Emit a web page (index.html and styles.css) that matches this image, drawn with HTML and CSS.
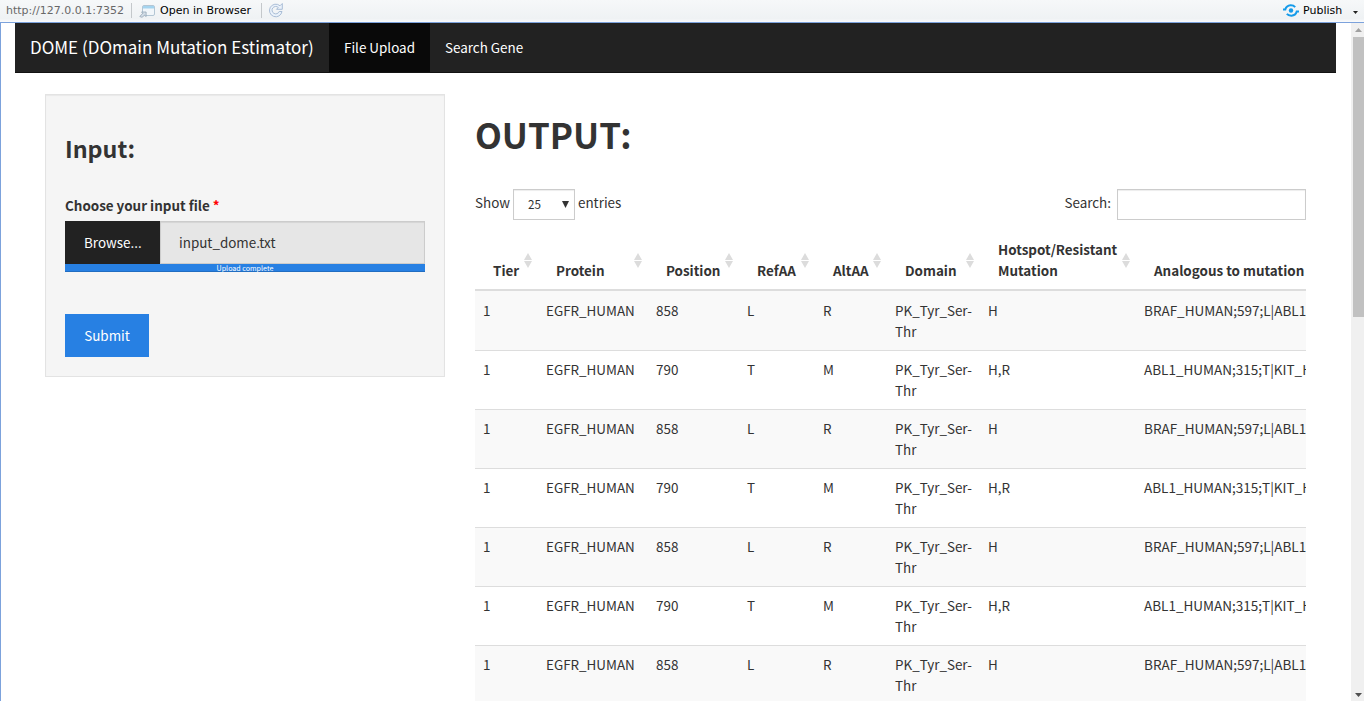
FILE: index.html
```
<!DOCTYPE html>
<html lang="en">
<head>
<meta charset="utf-8">
<title>DOME</title>
<link rel="stylesheet" href="styles.css">
</head>
<body>
<header class="toolbar">
  <span class="url">http://127.0.0.1:7352</span>
  <span class="sep"></span>
  <svg class="open-icon" width="16" height="14" viewBox="0 0 16 14"><rect x="3.500" y="1.500" width="12" height="10" rx="1.500" fill="#f1f6fa" stroke="#b3c6d4"/><path d="M4 2h11v2.500H4z" fill="#a4d4ef"/><path d="M.8 12.500l3-3.200L2.500 8h4.600v4.600L5.600 11.200 3 13.300z" fill="#d5dfe8" stroke="#93a5b5" stroke-width=".8"/></svg>
  <span class="open">Open in Browser</span>
  <span class="sep sep2"></span>
  <svg class="reload" width="16" height="16" viewBox="0 0 16 16"><path d="M12 3.800A6.300 6.300 0 1 0 14 9.500H11.200A3.700 3.700 0 1 1 10.300 5.500L8.500 7.300H14.300V1.500z" fill="#eaf2fb" stroke="#a9bdd6" stroke-linejoin="round"/></svg>
  <svg class="publish-icon" width="16" height="13" viewBox="0 0 16 13"><circle cx="8" cy="6.500" r="2.200" fill="#159bea"/><path d="M0 5.400H2.300Q3.500 1.600 7.500 1.300Q10.500 1.200 12.200 3.100M16 7.600H13.700Q12.500 11.400 8.500 11.700Q5.500 11.800 3.800 9.900" fill="none" stroke="#159bea" stroke-width="2"/></svg>
  <span class="publish">Publish</span>
  <svg class="caret" width="5" height="3" viewBox="0 0 5 3"><path d="M0 0h5L2.500 3z" fill="#222"/></svg>
</header>
<div class="viewer">
  <div class="page">
    <nav class="navbar">
      <span class="brand">DOME (DOmain Mutation Estimator)</span>
      <a class="tab active">File Upload</a>
      <a class="tab">Search Gene</a>
    </nav>
    <div class="content">
      <section class="panel">
        <h3 class="panel-title">Input:</h3>
        <label class="file-label">Choose your input file <span class="star">*</span></label>
        <div class="file-group"><span class="browse">Browse...</span><span class="filename">input_dome.txt</span></div>
        <div class="progress">Upload complete</div>
        <button class="submit">Submit</button>
      </section>
      <main class="output">
        <h1 class="output-title">OUTPUT:</h1>
        <div class="controls">
          <span class="show">Show</span>
          <span class="select">25<svg width="7" height="7" viewBox="0 0 7 7"><path d="M0 0h7L3.500 7z" fill="#333"/></svg></span>
          <span>entries</span>
          <span class="search-label">Search:</span>
          <input class="search" type="text">
        </div>
        <div class="table-wrap">
          <table class="grid">
            <colgroup><col class="c1"><col class="c2"><col class="c3"><col class="c4"><col class="c5"><col class="c6"><col class="c7"><col class="c8"></colgroup>
            <thead><tr id="head"></tr></thead>
            <tbody id="rows"></tbody>
          </table>
        </div>
      </main>
    </div>
  </div>
  <div class="scrollbar">
    <svg class="arrow" width="7" height="4" viewBox="0 0 7 4"><path d="M0 4h7L3.500 0z" fill="#a0a0a0"/></svg>
    <span class="thumb"></span>
    <svg class="arrow down" width="7" height="4" viewBox="0 0 7 4"><path d="M0 0h7L3.500 4z" fill="#505050"/></svg>
  </div>
</div>
<script src="app.js"></script>
</body>
</html>
```
FILE: styles.css
```
* { box-sizing: border-box; }
body {
  margin: 0; height: 701px; overflow: hidden; background: #fff; color: #333;
  font: 13.430px/21px "Noto Sans CJK SC", "Open Sans", sans-serif;
  display: flex; flex-direction: column;
}
.toolbar {
  height: 23px; flex: none; display: flex; align-items: center;
  padding: 0 6px 1px; border-bottom: 1px solid #7ca2dc;
  background: linear-gradient(#f6f8f9, #eff2f4 85%, #fafbfc);
  font: 11px/20px "DejaVu Sans", sans-serif; color: #000; white-space: nowrap;
}
.url { color: #686868; width: 118px; }
.sep { width: 1px; height: 15px; margin-left: 7px; background: #c4c8cb; }
.open-icon { margin-left: 7px; }
.open { margin-left: 5px; width: 92px; }
.sep2 { margin-left: 9px; }
.reload { margin-left: 6px; margin-top: -1px; }
.publish-icon { margin-left: auto; }
.publish { margin-left: 4px; width: 41px; }
.caret { margin: 3px 0 0 9px; }
.viewer { flex: 1; display: flex; min-height: 0; border-left: 1px solid #7ca2dc; }
.page { flex: 1; min-width: 0; overflow: hidden; padding: 0 15px 0 14px; }
.navbar {
  height: 50px; display: flex; background: #222; border-bottom: 1px solid #121212;
  color: #fff; line-height: 48px;
}
.brand { width: 314px; padding-left: 15px; font-size: 17px; white-space: nowrap; }
.tab { padding: 0 15px; white-space: nowrap; width: 108px; }
.active { background: #090909; width: 101px; }
.content { display: flex; padding: 21px 30px 0; gap: 30px; align-items: flex-start; }
.panel {
  width: 400px; height: 283px; flex: none; padding: 38px 19px 0;
  background: #f5f5f5; border: 1px solid #e3e3e3; box-shadow: inset 0 1px 1px rgba(0,0,0,.05);
}
.panel-title { margin: 0; font-size: 23.300px; line-height: 30px; font-weight: 700; }
.file-label { display: block; margin-top: 32px; font-weight: 700; }
.star { color: #f00; }
.file-group { display: flex; height: 43px; margin-top: 5px; line-height: 42px; }
.browse { width: 95px; background: #222; color: #fff; padding-left: 19px; }
.filename {
  flex: 1; padding-left: 18px; background: #e6e6e6; border: 1px solid #ccc; line-height: 40px;
  box-shadow: inset 0 1px 1px rgba(0,0,0,.075);
}
.progress {
  height: 8px; background: #2780e3; color: #fff; font-size: 7.100px; line-height: 8px;
  text-align: center; overflow: hidden; box-shadow: inset 0 -1px 0 rgba(0,0,0,.15);
}
.submit {
  display: block; width: 84px; height: 43px; margin-top: 42px; padding: 0 0 1px; border: 0;
  background: #2780e3; color: #fff; font: inherit;
}
.output { flex: 1; min-width: 0; padding-top: 19px; }
.output-title { margin: 0; font-size: 34.900px; line-height: 43px; font-weight: 700; }
.controls { display: flex; height: 31px; margin-top: 33px; line-height: 26px; }
.show { width: 35px; }
.select {
  width: 62px; margin: 0 3px 0 3px; padding: 0 5px 1px 14px; border: 1px solid #ccc;
  display: flex; align-items: center; justify-content: space-between; font-size: 11.700px;
  box-shadow: inset 0 1px 1px rgba(0,0,0,.075);
}
.search-label { margin-left: auto; }
.search {
  width: 189px; margin: 0 0 0 6px; border: 1px solid #ccc; background: #fff;
  box-shadow: inset 0 1px 1px rgba(0,0,0,.075);
}
.table-wrap { margin-top: 9px; overflow: hidden; }
.grid { width: 1200px; table-layout: fixed; border-collapse: separate; border-spacing: 0; }
.c1 { width: 63px; } .c2 { width: 110px; } .c3 { width: 91px; } .c4 { width: 76px; }
.c5 { width: 72px; } .c6 { width: 93px; } .c7 { width: 156px; } .c8 { width: 539px; }
.grid th {
  padding: 10px 0 8px 18px; text-align: left; vertical-align: bottom;
  border-bottom: 2px solid #ddd; font-weight: 700; white-space: nowrap; position: relative;
}
.grid td {
  padding: 8px 0 8px 8px; vertical-align: top; border-bottom: 1px solid #ddd; white-space: nowrap;
}
.grid tr:first-child td { padding-top: 9px; }
.grid td:last-child { font-size: 13.520px; }
.grid tbody tr:nth-child(odd) { background: #f9f9f9; }
.sort { position: absolute; right: 6px; top: 24px; }
.scrollbar {
  width: 13px; flex: none; background: #f0f0f0; display: flex; flex-direction: column;
  align-items: flex-end; padding: 5px 0 4px 2px;
}
.arrow { margin-right: 2px; flex: none; }
.thumb { width: 11px; height: 280px; margin-top: 5px; background: #c1c1c1; }
.down { margin-top: auto; }
```
FILE: app.js
```
const heads = ["Tier", "Protein", "Position", "RefAA", "AltAA", "Domain", "Hotspot/Resistant<br>Mutation", "Analogous to mutation"];
const icon = '<svg class="sort" width="8" height="15" viewBox="0 0 8 15"><path d="M0 7h8L4 0zM0 8h8L4 15z" fill="#dcdcdc"/></svg>';
document.getElementById("head").innerHTML = heads.map(h => `<th>${h}${icon}</th>`).join("");
const a = ["1", "EGFR_HUMAN", "858", "L", "R", "PK_Tyr_Ser-<br>Thr", "H", "BRAF_HUMAN;597;L|ABL1_HUMAN"];
const b = ["1", "EGFR_HUMAN", "790", "T", "M", "PK_Tyr_Ser-<br>Thr", "H,R", "ABL1_HUMAN;315;T|KIT_HUMAN"];
document.getElementById("rows").innerHTML = [a, b, a, b, a, b, a]
  .map(r => `<tr>${r.map(c => `<td>${c}</td>`).join("")}</tr>`).join("");
```
